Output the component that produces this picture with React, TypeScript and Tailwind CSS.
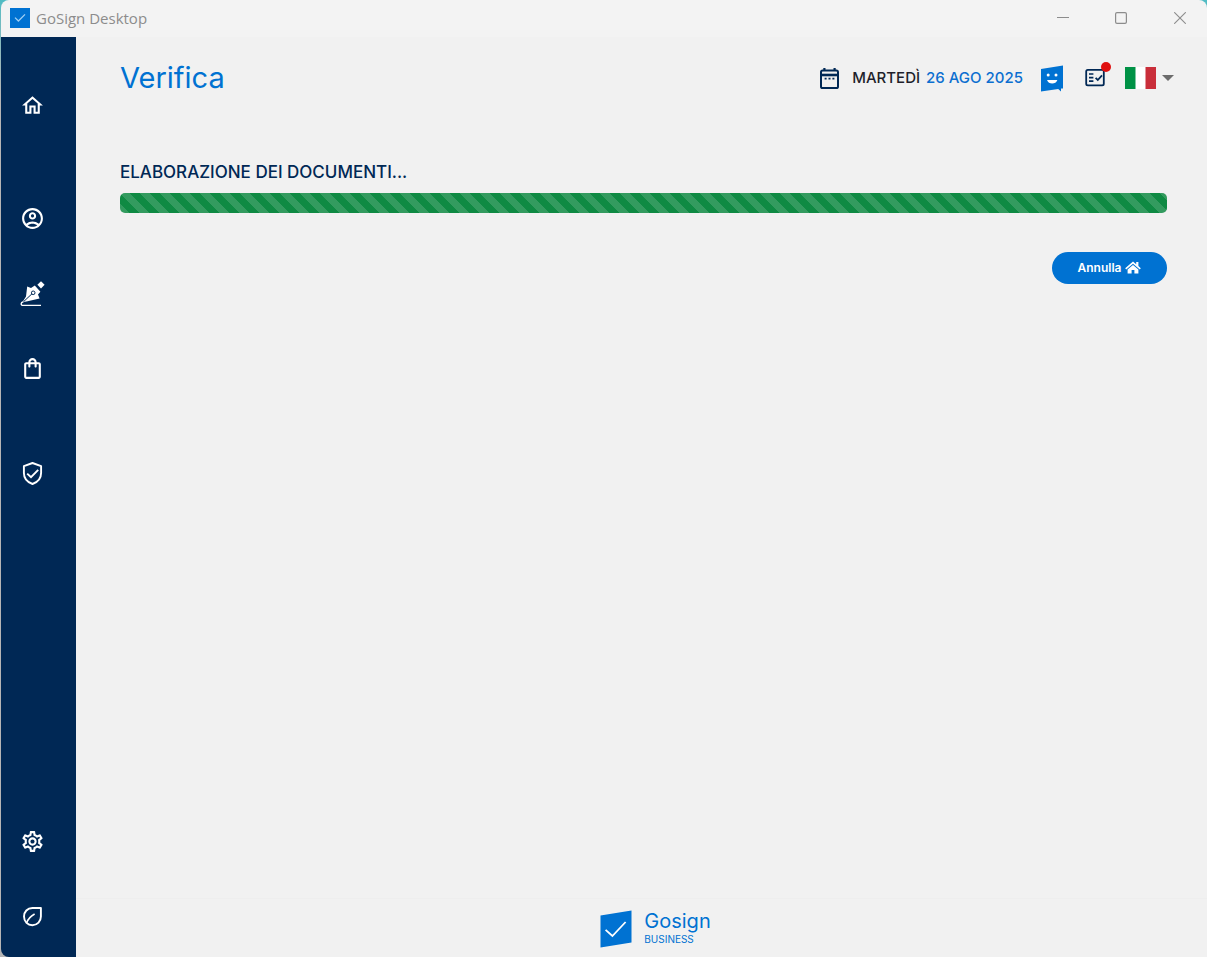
import { useState } from "react";
import {
  MdOutlineAccountCircle,
  MdOutlineHome,
  MdOutlineSettings,
  MdOutlineShoppingBag,
} from "react-icons/md";

function PenIcon() {
  return (
    <svg width="25" height="25" viewBox="0 0 25 25" fill="none" className="overflow-visible">
      <path d="M7.2 5.6L11 7L14.8 4.6L20.4 10.8L18 13.4L19.6 17.4L7.6 20.2L2.4 21.2L6 15.4Z" fill="#fff" />
      <path d="M3.2 21L12.4 12.4" stroke="#002855" strokeWidth="1" />
      <circle cx="13.2" cy="11.8" r="1.8" fill="#fff" stroke="#002855" strokeWidth="1" />
      <path d="M21 0.2L24.6 3.8L21 7.4L17.4 3.8Z" fill="#fff" />
      <path d="M3.4 20.8C0.4 21.4 0.6 24.4 3 24.4H21" stroke="#fff" strokeWidth="1.4" />
    </svg>
  );
}

function ShieldIcon() {
  return (
    <svg width="25" height="25" viewBox="0 0 25 25" fill="none" stroke="#fff" strokeWidth="1.9">
      <path d="M12.5 2L21.1 5.2V12C21.1 17 17.6 21.2 12.5 23C7.4 21.2 3.9 17 3.9 12V5.2Z" strokeLinejoin="round" />
      <path d="M7.2 12.6L11 16.2L18.2 8.8" />
    </svg>
  );
}

function LeafIcon() {
  return (
    <svg width="25" height="25" viewBox="0 0 25 25" fill="none" stroke="#fff">
      <path
        d="M20.9 4H12.4C7.4 4 4 7.8 4 12.6C4 17.8 7.8 21.2 12.4 21.2C17.4 21.2 20.9 17.4 20.9 12.6Z"
        strokeWidth="1.9"
        strokeLinejoin="round"
      />
      <path d="M6.6 19C7.8 15.4 10.2 12.4 14.6 10" strokeWidth="1.7" />
    </svg>
  );
}

function CalendarIcon() {
  return (
    <svg width="25" height="25" viewBox="0 0 25 25" fill="none" stroke="#002855">
      <rect x="4" y="4.6" width="17" height="17.4" rx="1.6" strokeWidth="2" />
      <path d="M4 9H21" strokeWidth="2.6" />
      <path d="M7.4 2V5M17.6 2V5" strokeWidth="2.2" />
      <path d="M7.6 12.6H9.6M11.5 12.6H13.5M15.4 12.6H17.4" strokeWidth="1.8" />
    </svg>
  );
}

function TaskIcon() {
  return (
    <svg width="24" height="24" viewBox="0 0 24 24" fill="none" stroke="#002855">
      <rect x="3.2" y="3.8" width="17.6" height="15.6" rx="1.6" strokeWidth="1.8" />
      <path d="M6 8H10.4M6 11.6H10.4M6 15.2H10.4" strokeWidth="1.7" />
      <path d="M12.6 11.8L14.8 14L19 9.4" strokeWidth="1.8" />
    </svg>
  );
}

function SmileIcon() {
  return (
    <svg width="22" height="27" viewBox="0 0 22 27" fill="none">
      <path d="M0 4L22 0.4V23.4L20 23.6V26.4L17.2 24L0 26.4Z" fill="#0072d2" />
      <circle cx="7.2" cy="10" r="1.5" fill="#fff" />
      <circle cx="15" cy="10" r="1.5" fill="#fff" />
      <path d="M6 15H16.4C15.6 17.4 13.6 18.6 11.2 18.6C8.8 18.6 6.8 17.4 6 15Z" fill="#fff" />
    </svg>
  );
}

function ItalyFlag() {
  return (
    <svg width="31" height="22" viewBox="0 0 31 22">
      <rect width="31" height="22" fill="#fff" />
      <rect width="10.5" height="22" fill="#009246" />
      <rect x="20.5" width="10.5" height="22" fill="#c92e3a" />
    </svg>
  );
}

function HouseIcon() {
  return (
    <svg width="16" height="14" viewBox="0 0 16 14" fill="#fff">
      <path d="M8 0.6L0.2 7.2L1.2 8.4L8 2.8L14.8 8.4L15.8 7.2L13.4 5.1V1H11.2V3.3Z" />
      <path d="M8 3.9L2.6 8.4V12.6H6.6V9H9.4V12.6H13.4V8.4Z" />
    </svg>
  );
}

function TitleBar() {
  return (
    <div className="flex h-[37px] shrink-0 items-center justify-between rounded-t-lg bg-[#f3f3f3] pb-0.5 pl-[9px] text-[#8c8c8c]">
      <div className="flex items-center gap-1.5">
        <svg width="20" height="20" viewBox="0 0 20 20" fill="none">
          <rect width="20" height="20" fill="#0072d2" />
          <path d="M5 9.6L8.4 13L15 6.4" stroke="#9fd0f5" strokeWidth="1.3" />
        </svg>
        <span className="font-['Open_Sans',sans-serif] text-[15px] leading-5">GoSign Desktop</span>
      </div>
      <div className="flex h-full">
        <button type="button" aria-label="Riduci" className="flex w-[52px] items-center justify-center">
          <svg width="12" height="12" viewBox="0 0 12 12" stroke="currentColor">
            <path d="M0 5.5H12" />
          </svg>
        </button>
        <button type="button" aria-label="Ingrandisci" className="flex w-16 items-center justify-center">
          <svg width="12" height="12" viewBox="0 0 12 12" fill="none" stroke="currentColor" strokeWidth="1.2">
            <rect x="0.6" y="0.6" width="10.8" height="10.8" rx="1.4" />
          </svg>
        </button>
        <button type="button" aria-label="Chiudi" className="flex w-[54px] items-center justify-center">
          <svg width="12" height="12" viewBox="0 0 12 12" stroke="currentColor" strokeWidth="1.1">
            <path d="M0.2 0.2L11.8 11.8M11.8 0.2L0.2 11.8" />
          </svg>
        </button>
      </div>
    </div>
  );
}

const topItems = [
  { label: "Home", icon: <MdOutlineHome size={25} />, space: "mb-[38px]" },
  { label: "Profilo", icon: <MdOutlineAccountCircle size={25} />, space: "" },
  { label: "Firma", icon: <PenIcon />, space: "" },
  { label: "Acquista", icon: <MdOutlineShoppingBag size={25} />, space: "mb-[30px]" },
  { label: "Verifica", icon: <ShieldIcon />, space: "" },
];

const bottomItems = [
  { label: "Impostazioni", icon: <MdOutlineSettings size={25} />, space: "" },
  { label: "Sostenibilità", icon: <LeafIcon />, space: "" },
];

function Sidebar() {
  const renderItem = (item: { label: string; icon: React.ReactNode; space: string }) => (
    <li key={item.label} className={item.space}>
      <a href="#" aria-label={item.label} className="flex h-[75px] items-center pl-[19px] text-white">
        {item.icon}
      </a>
    </li>
  );

  return (
    <nav className="flex w-[75px] shrink-0 flex-col justify-between rounded-bl-lg bg-[#002855] pt-[31px] pb-[3px]">
      <ul>{topItems.map(renderItem)}</ul>
      <ul>{bottomItems.map(renderItem)}</ul>
    </nav>
  );
}

function Header() {
  const [langOpen, setLangOpen] = useState(false);

  return (
    <header className="flex items-center justify-between pr-[33px] pl-11">
      <h1 className="text-[29px] leading-10 text-[#0072d2]">Verifica</h1>
      <div className="flex items-center text-[#002855]">
        <CalendarIcon />
        <p className="ml-2.5 flex gap-1.5 text-[15px] leading-6 font-medium text-[#1f1f2b]">
          <span>MARTEDÌ</span>
          <span className="text-[#0c6fd0]">26 AGO 2025</span>
        </p>
        <button type="button" aria-label="Feedback" className="ml-[18px]">
          <SmileIcon />
        </button>
        <button type="button" aria-label="Attività" className="relative ml-5">
          <TaskIcon />
          <span className="absolute -top-1 -right-1 size-2.5 rounded-full bg-[#e01010]" />
        </button>
        <button
          type="button"
          aria-label="Lingua"
          aria-haspopup="listbox"
          aria-expanded={langOpen}
          onClick={() => setLangOpen(!langOpen)}
          className="ml-[18px] flex items-center gap-1.5 text-[#6c6c6c]"
        >
          <ItalyFlag />
          <svg width="12" height="6" viewBox="0 0 12 6" fill="currentColor">
            <path d="M0 0H12L6 6Z" />
          </svg>
        </button>
      </div>
    </header>
  );
}

function Footer() {
  return (
    <footer className="flex h-[59px] items-center justify-center gap-3 border-t border-[#eeeeee] pt-0.5 pl-7 text-[#0072d2]">
      <svg width="32" height="38" viewBox="0 0 32 38" fill="none">
        <path d="M0.5 5.6L31.5 0.4V32.6L0.5 37.6Z" fill="#0072d2" />
        <path d="M5.6 19.8L12.4 26L25.6 12" stroke="#fff" strokeWidth="1.8" />
      </svg>
      <div>
        <p className="text-xl leading-5">Gosign</p>
        <p className="text-[10px] leading-4">BUSINESS</p>
      </div>
    </footer>
  );
}

export default function App() {
  return (
    <div className="flex min-h-screen flex-col bg-gradient-to-b from-[#4fbcc4] to-[#b5b5b5] to-10% pl-px font-['Inter',sans-serif]">
      <TitleBar />
      <div className="flex grow">
        <Sidebar />
        <div className="flex min-w-0 grow flex-col bg-[#f1f1f1] pt-[21px]">
          <Header />
          <main className="grow pt-[62px] pr-10 pl-11">
            <h2 id="progress-label" className="text-[17px] leading-6 font-medium text-[#002855]">
              ELABORAZIONE DEI DOCUMENTI...
            </h2>
            <div
              role="progressbar"
              aria-labelledby="progress-label"
              className="mt-[9px] h-5 rounded-[5px] bg-[#0f8a43] bg-[linear-gradient(45deg,rgba(255,255,255,0.15)_25%,transparent_25%,transparent_50%,rgba(255,255,255,0.15)_50%,rgba(255,255,255,0.15)_75%,transparent_75%)] bg-[length:20px_20px]"
            />
            <div className="mt-[39px] flex justify-end">
              <button
                type="button"
                className="flex h-8 w-[115px] items-center justify-center gap-1 rounded-full bg-[#0072d2] text-xs font-semibold text-white"
              >
                Annulla
                <HouseIcon />
              </button>
            </div>
          </main>
          <Footer />
        </div>
      </div>
    </div>
  );
}
